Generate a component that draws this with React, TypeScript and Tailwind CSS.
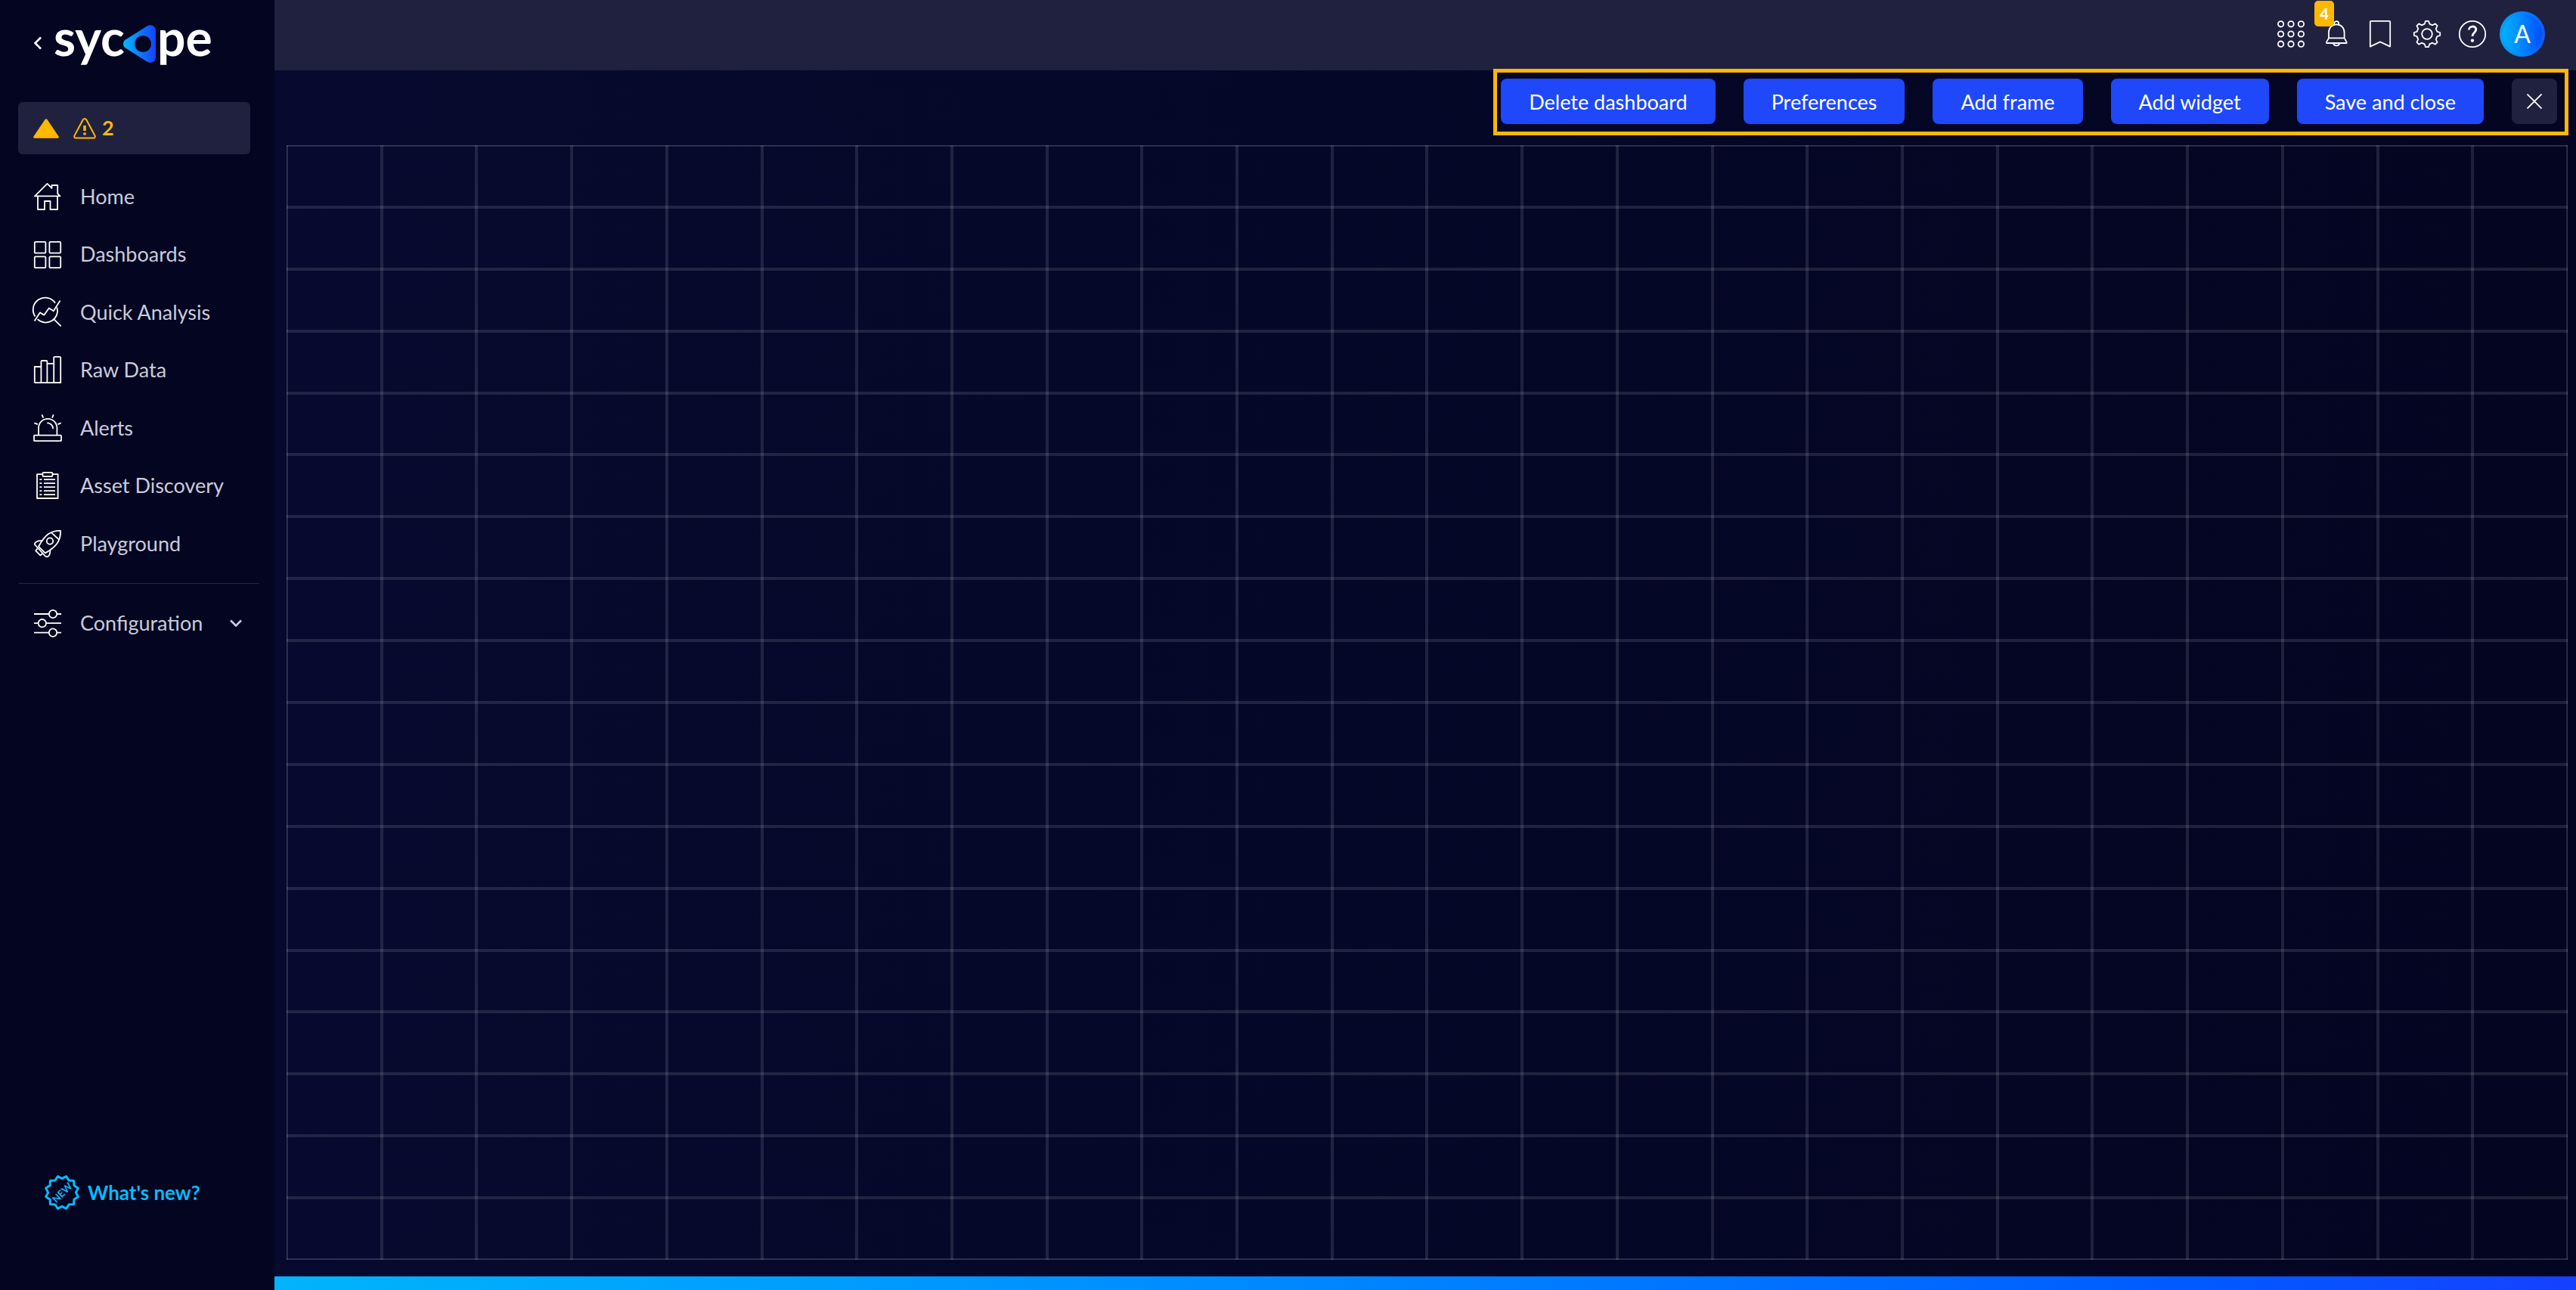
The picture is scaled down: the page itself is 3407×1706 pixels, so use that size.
import type { ReactNode } from "react";

function Icon({ children }: { children: ReactNode }) {
  return (
    <svg
      viewBox="0 0 36 36"
      className="size-9 shrink-0 overflow-visible"
      fill="none"
      stroke="currentColor"
      strokeWidth="1.8"
      strokeLinejoin="round"
      aria-hidden="true"
    >
      {children}
    </svg>
  );
}

const HomeIcon = () => (
  <Icon>
    <path d="M1 17.4 17.5.9l6 5.9V3h7.7v11l3.3 3.4Z" />
    <path d="M5 17.4V35h9V24h7.5v11H31V17.4" />
  </Icon>
);

const DashboardsIcon = () => (
  <Icon>
    <rect x=".8" y=".8" width="14.6" height="14.8" rx="1.2" />
    <rect x="20.4" y=".8" width="14.8" height="14.8" rx="1.2" />
    <rect x=".8" y="20.4" width="14.6" height="14.8" rx="1.2" />
    <rect x="20.4" y="20.4" width="14.8" height="14.8" rx="1.2" />
  </Icon>
);

const AnalysisIcon = () => (
  <Icon>
    <path d="M28 5.8A15.6 15.6 0 1 0 1.4 23.4M4.6 27.2A15.6 15.6 0 0 0 30.4 11.6" />
    <path d="M.6 29.6 7.8 18.4l5.6 3.2 6.4-9.2 6 3.8L34.6 2.4" />
    <path d="m26.8 27.6 8.8 8.8" />
  </Icon>
);

const RawDataIcon = () => (
  <Icon>
    <path d="M.8 35.2V14h8.4M9.4 35.2V7.2q0-1.2 1.2-1.2h5.6q1.2 0 1.2 1.2v28M17.6 9.8H26M26.2 35.2V2q0-1.2 1.2-1.2H34q1.2 0 1.2 1.2v33.2Z" />
    <path d="M.8 35.2h34.4" />
  </Icon>
);

const AlertsIcon = () => (
  <Icon>
    <rect x="0" y="27.6" width="36" height="7.6" rx="1" />
    <path d="M6 27.4V18a12 12 0 0 1 24.4 0v9.4" />
    <path d="M18 11.4a7.2 7.2 0 0 1 7 7.2" strokeLinecap="round" />
    <path d="m.4 11.4 4.4 1.8M35.8 11.4l-4.4 1.8M10.4.4l1.8 4.2M25.8.4 24 4.6" />
  </Icon>
);

const AssetIcon = () => (
  <Icon>
    <path d="M11 3.2H4V35h27.6V3.2H25" />
    <path d="M11.4 2q0-1.2 1.2-1.2h10.6q1.2 0 1.2 1.2v3q0 1.2-1.2 1.2H12.6q-1.2 0-1.2-1.2Z" />
    <path d="M7.4 10.2h3M13 10.2h15M7.4 15.2h3M13 15.2h15M7.4 20.2h3M13 20.2h15M7.4 25.2h3M13 25.2h15M7.4 30.2h3M13 30.2h15" />
  </Icon>
);

const RocketIcon = () => (
  <Icon>
    <path d="M35 .8C22 .4 14.6 6.2 6 21.8l8.8 8.6C29.6 22 35.6 14 35 .8Z" />
    <circle cx="21" cy="14.6" r="4.2" />
    <path d="m23.2 3.6 9.6 8.8M10.4 14.2C5 13.6.8 16 .8 19l14.6 16c3.6 1.2 6-1.6 6-9.2" />
    <path d="m4.6 24.4-2.4 3 6 6 3.4-2.4" />
  </Icon>
);

const SlidersIcon = () => (
  <Icon>
    <path d="M0 6h19.6M30.4 6H36M0 18.2h5M16.2 18.2H36M0 30.6h19.6M30.4 30.6H36" />
    <circle cx="25" cy="6" r="5.2" />
    <circle cx="10.8" cy="18.2" r="5.2" />
    <circle cx="25" cy="30.6" r="5.2" />
  </Icon>
);

const AppsIcon = () => (
  <Icon>
    {[4.8, 18, 31.2].map((cy) =>
      [4.6, 18, 31.4].map((cx) => <circle key={`${cx}-${cy}`} cx={cx} cy={cy} r="3.7" />),
    )}
  </Icon>
);

const BellIcon = () => (
  <Icon>
    <path d="M8 23.4V16c0-6 4-10.6 10.2-10.6S28.6 10 28.6 16v7.4l3 5.2V30H5v-1.4Z" />
    <path d="M8 23.4h20.6M15.2 5.8V4.2a3 3 0 0 1 6 0v1.6M14 30.2c.8 4.2 7.6 4.2 8.4 0" />
  </Icon>
);

const BookmarkIcon = () => (
  <Icon>
    <path d="M2.8 34.6V2q0-1.2 1.2-1.2h24q1.2 0 1.2 1.2v32.6L16 28.4Z" />
  </Icon>
);

const GearIcon = () => (
  <Icon>
    <circle cx="18" cy="18" r="6.8" />
    <path d="M14.8 4.6 16 .8h4l1.2 3.8 4 1.7 3.6-1.9 2.8 2.8-1.9 3.6 1.7 4L35.2 16v4l-3.8 1.2-1.7 4 1.9 3.6-2.8 2.8-3.6-1.9-4 1.7-1.2 3.8h-4l-1.2-3.8-4-1.7-3.6 1.9-2.8-2.8 1.9-3.6-1.7-4L.8 20v-4l3.8-1.2 1.7-4-1.9-3.6 2.8-2.8 3.6 1.9Z" />
  </Icon>
);

const HelpIcon = () => (
  <Icon>
    <circle cx="18" cy="18" r="17.2" />
    <path d="M13.4 12.6c0-6 9.4-6 9.4-.6 0 4-4.8 4-4.8 9" strokeWidth="2.8" />
    <circle cx="18" cy="26.6" r="2.2" fill="currentColor" stroke="none" />
  </Icon>
);

const NewBadgeIcon = () => {
  const points = Array.from({ length: 24 }, (_, i) => {
    const radius = i % 2 ? 22 : 18.4;
    const angle = (i * Math.PI) / 12;
    return `${(23 + radius * Math.sin(angle)).toFixed(1)},${(23 - radius * Math.cos(angle)).toFixed(1)}`;
  }).join(" ");
  return (
    <svg viewBox="0 0 46 46" className="size-[46px] shrink-0" aria-hidden="true">
      <polygon points={points} fill="none" stroke="currentColor" strokeWidth="3" strokeLinejoin="round" />
      <text
        x="23"
        y="28"
        textAnchor="middle"
        transform="rotate(-45 23 23)"
        fill="currentColor"
        className="font-['Lato',sans-serif] text-[13px] font-bold"
      >
        NEW
      </text>
    </svg>
  );
};

function Logo() {
  return (
    <a href="#home" aria-label="sycope" className="block">
      <svg viewBox="0 0 210 56" className="h-14 w-[210px] overflow-visible" aria-hidden="true">
        <defs>
          <linearGradient id="logo-fill" x1="0" x2="1">
            <stop offset="0" stopColor="#04b8fb" />
            <stop offset="1" stopColor="#1540ff" />
          </linearGradient>
        </defs>
        <g fill="#ffffff" className="font-['Lato',sans-serif] text-[66px] font-bold">
          <text x="-3" y="42">syc</text>
          <text x="134" y="42">pe</text>
        </g>
        <path
          fill="url(#logo-fill)"
          fillRule="evenodd"
          d="M92 20.5 120.500 2.6C126-.8 132 2.4 132 8.6v34.8c0 6.2-6 9.4-11.5 6L92 31.500c-4-2.600-4-8.400 0-11ZM115 15a11 11 0 1 0 .1 0Z"
        />
      </svg>
    </a>
  );
}

const navItems = [
  { label: "Home", icon: <HomeIcon /> },
  { label: "Dashboards", icon: <DashboardsIcon /> },
  { label: "Quick Analysis", icon: <AnalysisIcon /> },
  { label: "Raw Data", icon: <RawDataIcon /> },
  { label: "Alerts", icon: <AlertsIcon /> },
  { label: "Asset Discovery", icon: <AssetIcon /> },
  { label: "Playground", icon: <RocketIcon /> },
];

function Sidebar() {
  return (
    <aside className="flex w-[363px] shrink-0 flex-col bg-[#040521]">
      <div className="flex h-[135px] items-start pt-8 pl-[44px]">
        <button type="button" aria-label="Collapse menu" className="mt-4 mr-[18px] text-white">
          <svg viewBox="0 0 12 18" className="h-[18px] w-3" fill="none" stroke="currentColor" strokeWidth="2.6">
            <path d="M10 1.5 2.5 9l7.5 7.5" />
          </svg>
        </button>
        <Logo />
      </div>

      <button
        type="button"
        aria-label="2 warnings"
        className="mr-8 ml-6 flex h-[69px] items-center rounded-md bg-[#20213f] pl-5 text-[#ffb800]"
      >
        <svg viewBox="0 0 34 26" className="h-[26px] w-[34px]" fill="currentColor" aria-hidden="true">
          <path d="M15.4 1.2q1.6-1.8 3.2 0L33.6 23.6q.8 2-1.2 2.2H1.6Q-.4 25.600.4 23.600Z" />
        </svg>
        <svg
          viewBox="0 0 30 28"
          className="mr-2 ml-[19px] h-7 w-[30px]"
          fill="none"
          stroke="currentColor"
          strokeWidth="2"
          aria-hidden="true"
        >
          <path d="M12.8 2.2q2.2-2.4 4.4 0L28.6 23.6q.8 2.8-2 3H3.4q-2.8-.2-2-3Z" />
          <path d="M15 10v7M15 19.6v3" strokeWidth="3.6" />
        </svg>
        <span className="text-[27px] font-bold">2</span>
      </button>

      <nav aria-label="Main" className="mt-[18px] text-[27px] text-[#c9cbdb]">
        <ul className="grid h-[535px] auto-rows-fr">
          {navItems.map((item) => (
            <li key={item.label}>
              <a href="#section" className="flex h-full items-center gap-[25px] pl-[45px]">
                <span className="text-white">{item.icon}</span>
                {item.label}
              </a>
            </li>
          ))}
        </ul>
        <hr className="mt-[14px] mr-5 ml-6 border-[#25264a]" />
        <button
          type="button"
          aria-expanded="false"
          className="mt-[14px] flex h-[76px] w-full items-center gap-[25px] pr-[43px] pl-[45px]"
        >
          <span className="text-white">
            <SlidersIcon />
          </span>
          Configuration
          <svg
            viewBox="0 0 16 10"
            className="ml-auto h-[10px] w-4"
            fill="none"
            stroke="currentColor"
            strokeWidth="2.6"
            aria-hidden="true"
          >
            <path d="m1 1.5 7 7 7-7" />
          </svg>
        </button>
      </nav>

      <a
        href="#news"
        className="mt-auto mb-[106px] flex items-center gap-[11px] pl-[59px] text-[26px] leading-[46px] font-bold text-[#04bcfb]"
      >
        <NewBadgeIcon />
        What's new?
      </a>
    </aside>
  );
}

function Header() {
  return (
    <header className="flex h-[93px] shrink-0 items-start justify-end gap-6 bg-[#20213f] pr-[41px] text-white">
      <button type="button" aria-label="Applications" className="mt-[27px]">
        <AppsIcon />
      </button>
      <button type="button" aria-label="Notifications" className="relative mt-[27px]">
        <BellIcon />
        <span className="absolute -top-[26px] -left-[11px] flex h-[34px] w-[26px] items-center justify-center rounded-[5px] bg-[#ffb800] text-[20px] font-black">
          4
        </span>
      </button>
      <button type="button" aria-label="Bookmarks" className="mt-[27px]">
        <BookmarkIcon />
      </button>
      <button type="button" aria-label="Settings" className="mt-[27px]">
        <GearIcon />
      </button>
      <button type="button" aria-label="Help" className="mt-[27px]">
        <HelpIcon />
      </button>
      <button
        type="button"
        aria-label="Account"
        className="mt-[15px] -ml-[6px] size-[60px] rounded-full border-4 border-[#1080ff]/40 bg-linear-to-r from-[#04b8fb] to-[#1540ff] bg-origin-border text-[32px]"
      >
        A
      </button>
    </header>
  );
}

const actions = ["Delete dashboard", "Preferences", "Add frame", "Add widget", "Save and close"];

function Toolbar() {
  return (
    <div className="relative -mt-[2px] mr-[10px] flex gap-[37px] self-end border-[5px] border-[#ffb800] pt-2 pr-[10px] pb-[10px] pl-[5px]">
      {actions.map((label) => (
        <button
          key={label}
          type="button"
          className="h-[60px] rounded-lg bg-[#1e48fa] px-[37px] pt-[2px] text-[27px] whitespace-nowrap text-white"
        >
          {label}
        </button>
      ))}
      <button
        type="button"
        aria-label="Close"
        className="flex size-[60px] items-center justify-center rounded-lg bg-[#20213f] text-white"
      >
        <svg viewBox="0 0 20 20" className="size-5" fill="none" stroke="currentColor" strokeWidth="1.8">
          <path d="m.5.5 19 19m0-19-19 19" />
        </svg>
      </button>
    </div>
  );
}

function GridCanvas() {
  return (
    <section
      aria-label="Dashboard canvas"
      className="mt-[13px] mr-[11px] mb-[22px] ml-4 grow border border-white/10 bg-origin-border bg-[repeating-linear-gradient(90deg,#ffffff1c_0_2px,transparent_2px_calc(100%/24-2px),#ffffff1c_calc(100%/24-2px)_calc(100%/24)),repeating-linear-gradient(180deg,#ffffff1c_0_2px,transparent_2px_calc(100%/18-2px),#ffffff1c_calc(100%/18-2px)_calc(100%/18))]"
    />
  );
}

export default function App() {
  return (
    <div className="flex min-h-screen bg-[#040521] font-['Lato','Open_Sans',sans-serif]">
      <Sidebar />
      <div className="flex min-w-0 grow flex-col">
        <Header />
        <main className="flex grow flex-col bg-linear-to-r from-[#070a2e] to-[#040521]">
          <Toolbar />
          <GridCanvas />
        </main>
        <footer className="h-[18px] shrink-0 bg-linear-to-r from-[#04b4fb] to-[#1540ff]" />
      </div>
    </div>
  );
}
